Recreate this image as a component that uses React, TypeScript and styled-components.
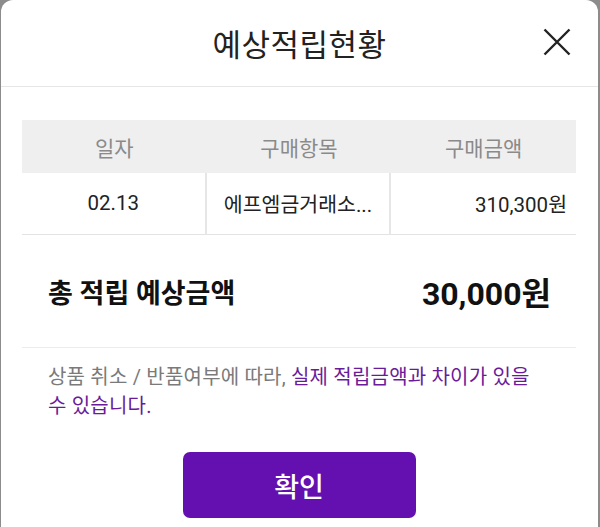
import React from "react";
import styled, { createGlobalStyle } from "styled-components";

const Global = createGlobalStyle`
  html, body { margin: 0; padding: 0; background: #8c8c8c; }
  body { font-family: Roboto, "Noto Sans CJK KR", sans-serif; overflow: hidden; }
  * { box-sizing: border-box; }
`;

const Modal = styled.div`
  margin: 0 2px 0 1px;
  height: 527px;
  background: #fff;
  border-radius: 12px 12px 0 0;
  display: flex;
  flex-direction: column;
`;

const Header = styled.div`
  height: 87px;
  border-bottom: 1px solid #e6e6e6;
  display: grid;
  grid-template-columns: 1fr auto 1fr;
  align-items: center;
  padding: 0 27px 2px 27px;
`;

const Title = styled.h1`
  grid-column: 2;
  margin: 0;
  font-size: 31px;
  font-weight: 400;
  color: #222;
  letter-spacing: 0.5px;
`;

const CloseButton = styled.button`
  grid-column: 3;
  justify-self: end;
  background: none;
  border: none;
  padding: 0;
  width: 28px;
  height: 28px;
  display: flex;
  cursor: pointer;
`;

const Body = styled.div`
  padding: 33px 22px 0 21px;
  display: flex;
  flex-direction: column;
`;

const Table = styled.div`
  display: grid;
  grid-template-columns: 1fr 1fr 1fr;
`;

const HeadCell = styled.div`
  height: 53px;
  background: #efefef;
  color: #8a8a8a;
  font-size: 21px;
  display: flex;
  align-items: center;
  justify-content: center;
`;

const Cell = styled.div<{ $align?: "center" | "right"; $divider?: boolean }>`
  height: 62px;
  border-bottom: 1px solid #e3e3e3;
  border-right: ${(p) => (p.$divider ? "2px solid #e6e6e6" : "none")};
  color: #222;
  font-size: 20.5px;
  display: flex;
  align-items: center;
  justify-content: ${(p) => (p.$align === "right" ? "flex-end" : "center")};
  padding: 0 9px 2px 9px;
  white-space: nowrap;
`;

const TotalRow = styled.div`
  height: 113px;
  border-bottom: 1px solid #ededed;
  display: flex;
  align-items: center;
  justify-content: space-between;
  padding: 0 25px 0 26px;
`;

const TotalLabel = styled.span`
  font-size: 27px;
  font-weight: 700;
  color: #111;
`;

const TotalValue = styled.span`
  font-size: 32px;
  font-weight: 700;
  color: #111;
`;

const Note = styled.p`
  margin: 15px 0 0;
  padding: 0 26px;
  font-size: 20px;
  line-height: 29px;
  letter-spacing: 0.2px;
  color: #7a7a7a;
  word-break: keep-all;
`;

const Highlight = styled.span`
  color: #6a1b9a;
`;

const ConfirmButton = styled.button`
  align-self: center;
  margin-top: 31px;
  width: 233px;
  height: 66px;
  border: none;
  border-radius: 7px;
  background: #6410b0;
  color: #fff;
  font-family: inherit;
  font-size: 27px;
  font-weight: 500;
  cursor: pointer;
`;

export default function App() {
  return (
    <>
      <Global />
      <Modal>
        <Header>
          <Title>예상적립현황</Title>
          <CloseButton aria-label="닫기">
            <svg width="28" height="28" viewBox="0 0 28 28">
              <path d="M1.5 1.5 L26.5 26.5 M26.5 1.5 L1.5 26.5" stroke="#222" strokeWidth="2.4" fill="none" />
            </svg>
          </CloseButton>
        </Header>
        <Body>
          <Table>
            <HeadCell>일자</HeadCell>
            <HeadCell>구매항목</HeadCell>
            <HeadCell>구매금액</HeadCell>
            <Cell $divider>02.13</Cell>
            <Cell $divider>에프엠금거래소...</Cell>
            <Cell $align="right">310,300원</Cell>
          </Table>
          <TotalRow>
            <TotalLabel>총 적립 예상금액</TotalLabel>
            <TotalValue>30,000원</TotalValue>
          </TotalRow>
          <Note>
            상품 취소 / 반품여부에 따라, <Highlight>실제 적립금액과 차이가 있을 수 있습니다.</Highlight>
          </Note>
          <ConfirmButton>확인</ConfirmButton>
        </Body>
      </Modal>
    </>
  );
}
